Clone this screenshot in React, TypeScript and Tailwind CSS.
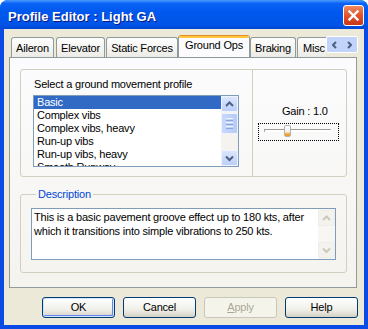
import React from "react";

function Chev({ dir, color = "#4d6185" }: { dir: "up" | "down" | "left" | "right"; color?: string }) {
  const pts = {
    up: "1,5 4.5,1.5 8,5",
    down: "1,1.5 4.5,5 8,1.5",
    left: "4,1 1,4 4,7",
    right: "1,1 4,4 1,7",
  }[dir];
  const vert = dir === "up" || dir === "down";
  return (
    <svg width={vert ? 9 : 5} height={vert ? 7 : 8} viewBox={vert ? "0 0 9 7" : "0 0 5 8"}>
      <polyline points={pts} fill="none" stroke={color} strokeWidth="2" />
    </svg>
  );
}

function ScrollBtn({ dir, disabled }: { dir: "up" | "down"; disabled?: boolean }) {
  return (
    <div
      className={
        disabled
          ? "h-[16px] flex items-center justify-center rounded-[2px] border border-[#efeee6] bg-[#f3f2ec]"
          : "h-[16px] flex items-center justify-center rounded-[2px] border border-[#eef3ff] bg-[linear-gradient(to_bottom,#dbe6fd,#bccff8)]"
      }
    >
      <Chev dir={dir} color={disabled ? "#cac8bb" : "#4d6185"} />
    </div>
  );
}

const items = ["Basic", "Complex vibs", "Complex vibs, heavy", "Run-up vibs", "Run-up vibs, heavy", "Smooth Runway"];

function Tab({ label, w, ml, selected }: { label: string; w: string; ml: string; selected?: boolean }) {
  if (selected)
    return (
      <div className={`${w} ${ml} h-[23px] -mb-px shrink-0 relative z-10 flex flex-col rounded-t-[3px] border-x border-[#919b9c] bg-[#fcfcfe] overflow-hidden`}>
        <div className="h-[1px] bg-[#e68b2c]" />
        <div className="h-[2px] bg-[#ffc73c]" />
        <div className="pt-[1px] text-center leading-[13px] whitespace-nowrap">{label}</div>
      </div>
    );
  return (
    <div className={`${w} ${ml} h-[20px] shrink-0 rounded-t-[3px] border border-b-0 border-[#919b9c] bg-[linear-gradient(to_bottom,#fefefe,#ecebe6)] pt-[4px] text-center leading-[13px] whitespace-nowrap`}>
      {label}
    </div>
  );
}

function Btn({ label, def, disabled }: { label: React.ReactNode; def?: boolean; disabled?: boolean }) {
  if (disabled)
    return (
      <div className="w-[73px] h-[21px] rounded-[3px] border border-[#c9c7ba] bg-[#f5f4ea] text-[#aca899] flex items-center justify-center leading-[13px]">
        {label}
      </div>
    );
  return (
    <div
      className={`w-[73px] h-[21px] rounded-[3px] border border-[#003c74] bg-[linear-gradient(to_bottom,#ffffff,#f0f0ea_60%,#d6d0c5)] flex items-center justify-center leading-[13px] ${
        def ? "shadow-[inset_0_0_0_1px_#cee7ff,inset_-1px_-1px_0_1px_#6982ee]" : ""
      }`}
    >
      {label}
    </div>
  );
}

export default function App() {
  return (
    <div className="w-[368px] h-[329px] bg-white font-['Liberation_Sans',Arial,sans-serif] text-[11px] tracking-[-0.2px] text-black">
      <div className="w-full h-full flex flex-col rounded-t-[8px] overflow-hidden bg-[#0a4be6]">
        {/* title bar */}
        <div className="h-[29px] shrink-0 flex items-start pt-[5px] pl-[8px] pr-[4px] bg-[linear-gradient(to_bottom,#4a9cff_0%,#0a63f6_12%,#0058ee_40%,#0054e6_85%,#0048d4_100%)]">
          <span className="mt-[4px] leading-[15px] text-white text-[13px] font-bold tracking-normal [text-shadow:1px_1px_0_#0a1883]">
            Profile Editor : Light GA
          </span>
          <div className="ml-auto w-[21px] h-[21px] rounded-[3px] border border-white bg-[linear-gradient(to_bottom,#f08a62,#e2532a_50%,#c8381a)] flex items-center justify-center">
            <svg width="11" height="11" viewBox="0 0 11 11">
              <path d="M1.5 1.5 L9.5 9.5 M9.5 1.5 L1.5 9.5" stroke="white" strokeWidth="2.4" strokeLinecap="square" />
            </svg>
          </div>
        </div>

        {/* client */}
        <div className="flex-1 mx-[4px] mb-[4px] bg-[#ece9d8] flex flex-col pt-[6px]">
          {/* tab strip */}
          <div className="h-[22px] flex items-start pl-[7px]">
            <div className="w-[315px] h-[22px] flex items-end overflow-hidden">
              <Tab label="Aileron" w="w-[43px]" ml="ml-0" />
              <Tab label="Elevator" w="w-[49px]" ml="ml-[2px]" />
              <Tab label="Static Forces" w="w-[72px]" ml="ml-[1px]" />
              <Tab label="Ground Ops" w="w-[72px]" ml="ml-0" selected />
              <Tab label="Braking" w="w-[46px]" ml="ml-0" />
              <Tab label="Misc" w="w-[34px]" ml="ml-[1px]" />
            </div>
            <div className="mt-[1px] w-[32px] h-[17px] flex rounded-[2px] border border-white bg-[#c3d4fb]">
              <div className="flex-1 flex items-center justify-center"><Chev dir="left" /></div>
              <div className="flex-1 flex items-center justify-center"><Chev dir="right" /></div>
            </div>
          </div>

          {/* tab panel */}
          <div className="ml-[5px] w-[348px] h-[231px] border border-[#919b9c] bg-[linear-gradient(to_bottom,#fcfcfe,#f4f3ee)] flex flex-col">
            <div className="mt-[11px] ml-[10px] w-[327px] h-[108px] border border-[#d0d0bf] rounded-[3px] flex">
              <div className="w-[231px] flex flex-col">
                <div className="pt-[8px] pl-[13px] leading-[13px]">Select a ground movement profile</div>
                <div className="mt-[4px] ml-[12px] w-[206px] h-[72px] border border-[#7f9db9] bg-white flex">
                  <div className="flex-1 flex flex-col overflow-hidden">
                    {items.map((it, i) => (
                      <div
                        key={it}
                        className={`h-[13px] shrink-0 leading-[13px] pl-[3px] whitespace-nowrap ${i === 0 ? "bg-[#316ac5] text-white" : ""}`}
                      >
                        {it}
                      </div>
                    ))}
                  </div>
                  <div className="w-[17px] flex flex-col bg-[#f4f3ef]">
                    <ScrollBtn dir="up" />
                    <div className="mt-[1px] h-[21px] rounded-[2px] border border-[#eef3ff] bg-[linear-gradient(to_right,#c8d8fd,#b6cbf7)] flex flex-col items-center justify-center gap-[1px]">
                      <div className="w-[7px] h-px bg-[#eef4fe]" />
                      <div className="w-[7px] h-px bg-[#8ca4d8]" />
                      <div className="w-[7px] h-px bg-[#eef4fe]" />
                      <div className="w-[7px] h-px bg-[#8ca4d8]" />
                      <div className="w-[7px] h-px bg-[#eef4fe]" />
                      <div className="w-[7px] h-px bg-[#8ca4d8]" />
                    </div>
                    <div className="flex-1" />
                    <ScrollBtn dir="down" />
                  </div>
                </div>
              </div>
              <div className="w-px bg-[#d0d0bf]" />
              <div className="flex-1 flex flex-col">
                <div className="pt-[35px] pl-[29px] leading-[13px]">Gain : 1.0</div>
                <div className="mt-[5px] ml-[5px] w-[81px] h-[18px] border border-dotted border-black relative">
                  <div className="mt-[5px] ml-[5px] w-[67px] h-[3px] border-t border-l border-[#9d9c99] bg-white rounded-[1px]" />
                  <div className="absolute left-[25px] top-[1px] w-[7px] h-[12px] rounded-[2px] border border-[#b5b3a8] bg-[linear-gradient(to_bottom,#ffffff,#f2f1ec_60%,#f6b54a_75%,#e8961e)]" />
                </div>
              </div>
            </div>

            <fieldset className="mt-[11px] ml-[10px] w-[327px] border border-[#d0d0bf] rounded-[3px] pt-[7px] pb-[12px] pl-[10px]">
              <legend className="ml-[5px] px-[2px] leading-[13px] text-[#0046d5]">Description</legend>
              <div className="w-[305px] h-[52px] border border-[#7f9db9] bg-white flex">
                <div className="flex-1 pl-[2px] pt-[1px] leading-[14px] whitespace-nowrap">
                  This is a basic pavement groove effect up to 180 kts, after
                  <br />
                  which it transitions into simple vibrations to 250 kts.
                </div>
                <div className="w-[17px] flex flex-col justify-between bg-[#f7f6f2] py-px">
                  <ScrollBtn dir="up" disabled />
                  <ScrollBtn dir="down" disabled />
                </div>
              </div>
            </fieldset>
          </div>

          {/* buttons */}
          <div className="mt-[9px] pl-[38px] flex gap-[8px]">
            <Btn label="OK" def />
            <Btn label="Cancel" />
            <Btn label={<span><span className="underline">A</span>pply</span>} disabled />
            <Btn label="Help" />
          </div>
        </div>
      </div>
    </div>
  );
}
